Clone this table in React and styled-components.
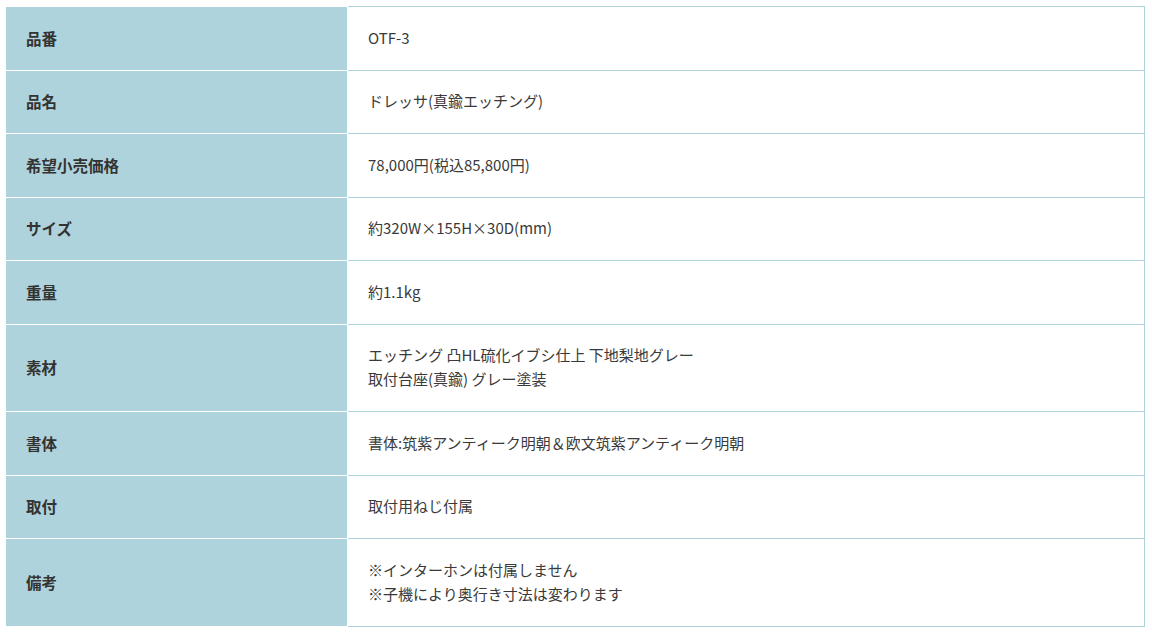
import React from 'react';
import styled, { createGlobalStyle } from 'styled-components';

const GlobalStyle = createGlobalStyle`
  body {
    margin: 0;
    background: #fff;
    font-family: "Noto Sans CJK JP", "Noto Sans", sans-serif;
  }
`;

const rows = [
  ['品番', ['OTF-3']],
  ['品名', ['ドレッサ(真鍮エッチング)']],
  ['希望小売価格', ['78,000円(税込85,800円)']],
  ['サイズ', ['約320W×155H×30D(mm)']],
  ['重量', ['約1.1kg']],
  ['素材', ['エッチング 凸HL硫化イブシ仕上 下地梨地グレー', '取付台座(真鍮) グレー塗装']],
  ['書体', ['書体:筑紫アンティーク明朝＆欧文筑紫アンティーク明朝']],
  ['取付', ['取付用ねじ付属']],
  ['備考', ['※インターホンは付属しません', '※子機により奥行き寸法は変わります']],
];

const Wrap = styled.div`
  padding: 6px 7px 6px 6px;
`;

const Table = styled.table`
  width: 100%;
  border-collapse: collapse;
  line-height: 24px;
  color: #333;
`;

const Head = styled.th`
  width: 30%;
  background: #afd3dc;
  border: 1px solid #fff;
  border-left: none;
  padding: 18.5px 20px 20px;
  text-align: left;
  font-size: 15.5px;
  font-weight: bold;
  vertical-align: middle;
`;

const Cell = styled.td`
  border: 1px solid #afd3dc;
  padding: 18.5px 20px 20px;
  font-size: 15px;
  color: #3a3a3a;
  vertical-align: middle;
`;

export default function App() {
  return (
    <Wrap>
      <GlobalStyle />
      <Table>
        <tbody>
          {rows.map(([label, lines]) => (
            <tr key={label}>
              <Head>{label}</Head>
              <Cell>
                {lines.map((l, i) => (
                  <div key={i}>{l}</div>
                ))}
              </Cell>
            </tr>
          ))}
        </tbody>
      </Table>
    </Wrap>
  );
}
